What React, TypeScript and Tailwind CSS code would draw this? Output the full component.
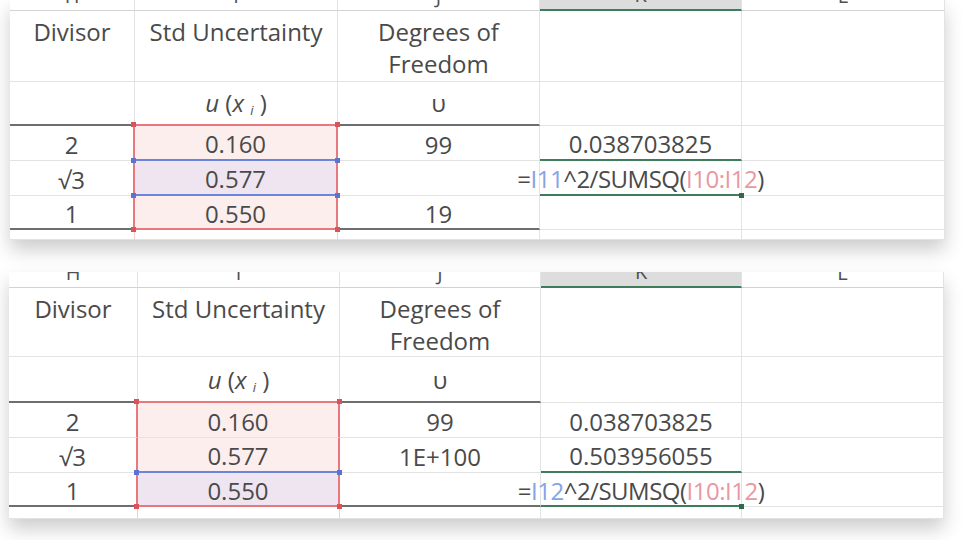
import type { ReactNode } from "react";
import { twMerge } from "tailwind-merge";

// gridline / highlight colours
const RED = "border-r-2 border-r-[#e8787c]";
const THICK = "border-b-2 border-b-[#6e6e6e]";
const BLUE_B = "border-b-2 border-b-[#6d85d8]";
const RED_B = "border-b-2 border-b-[#e8787c]";
const GREEN_B = "border-b-2 border-b-[#3f7c5c]";
const PINK = "bg-[#fdeeee]";
const LAVENDER = "bg-[#eee5f1]";

type CellSpec = { c?: ReactNode; k?: string; h?: ReactNode };

function Cell({ spec, row }: { spec: CellSpec; row: string }) {
  return (
    <div
      className={twMerge(
        "relative flex justify-center border-r border-b border-r-[#e3e3e3] border-b-[#e3e3e3] whitespace-nowrap",
        row,
        spec.k
      )}
    >
      {spec.c}
      {spec.h}
    </div>
  );
}

function Handle({ className }: { className: string }) {
  return <span className={twMerge("absolute z-10 h-[5px] w-[5px]", className)} />;
}

function Formula({ cell }: { cell: string }) {
  return (
    <span className="tracking-[-0.5px]">
      =<span className="text-[#86a3e6]">{cell}</span>^2/SUMSQ(
      <span className="text-[#ea97a3]">I10:I12</span>)
    </span>
  );
}

const Ux = (
  <span>
    <i>u</i> (<i>x</i> <sub className="text-[13px] italic">i</sub> )
  </span>
);

const letters = ["H", "I", "J", "K", "L"];

function headerRow(): CellSpec[] {
  return letters.map((l, i) => ({
    c: <span className="text-[20px] leading-[20px] text-[#505050]">{l}</span>,
    k: i === 3 ? "bg-[#dddddd] " + GREEN_B : "border-b-[#d2d2d2]",
  }));
}

const redTL = <Handle className="-left-[4px] -top-[4px] bg-[#d9535a]" />;
const redTR = <Handle className="-right-[4px] -top-[4px] bg-[#d9535a]" />;
const redBL = <Handle className="-left-[4px] -bottom-[4px] bg-[#d9535a]" />;
const redBR = <Handle className="-right-[4px] -bottom-[4px] bg-[#d9535a]" />;
const blueL = <Handle className="-left-[4px] -bottom-[4px] bg-[#5a74cf]" />;
const blueR = <Handle className="-right-[4px] -bottom-[4px] bg-[#5a74cf]" />;
const fill = <Handle className="-right-[3px] -bottom-[4px] bg-[#2f6b4a]" />;

const topRows: CellSpec[][] = [
  headerRow(),
  [
    { c: "Divisor" },
    { c: "Std Uncertainty" },
    { c: <span className="text-center">Degrees of<br />Freedom</span> },
    {},
    {},
  ],
  [{ k: THICK }, { c: Ux, k: RED_B }, { c: "υ", k: THICK }, {}, {}],
  [
    { c: "2", k: RED },
    { c: "0.160", k: `${RED} ${PINK} ${BLUE_B}`, h: <>{redTL}{redTR}{blueL}{blueR}</> },
    { c: "99" },
    { c: "0.038703825", k: GREEN_B },
    {},
  ],
  [
    { c: "√3", k: RED },
    { c: "0.577", k: `${RED} ${LAVENDER} ${BLUE_B}`, h: <>{blueL}{blueR}</> },
    {},
    { c: <Formula cell="I11" />, k: GREEN_B, h: fill },
    {},
  ],
  [
    { c: "1", k: `${RED} ${THICK}` },
    { c: "0.550", k: `${RED} ${PINK} ${RED_B}`, h: <>{redBL}{redBR}</> },
    { c: "19", k: THICK },
    {},
    {},
  ],
  [
    { k: "border-r-[#f4cccc]" },
    { k: "border-r-[#f4cccc]" },
    {},
    {},
    {},
  ],
];

const bottomRows: CellSpec[][] = [
  headerRow(),
  topRows[1],
  topRows[2],
  [
    { c: "2", k: RED },
    { c: "0.160", k: `${RED} ${PINK}`, h: <>{redTL}{redTR}</> },
    { c: "99" },
    { c: "0.038703825" },
    {},
  ],
  [
    { c: "√3", k: RED },
    { c: "0.577", k: `${RED} ${PINK} ${BLUE_B}`, h: <>{blueL}{blueR}</> },
    { c: "1E+100" },
    { c: "0.503956055", k: GREEN_B },
    {},
  ],
  [
    { c: "1", k: `${RED} ${THICK}` },
    { c: "0.550", k: `${RED} ${LAVENDER} ${RED_B}`, h: <>{redBL}{redBR}</> },
    { k: THICK },
    { c: <Formula cell="I12" />, k: GREEN_B, h: fill },
    {},
  ],
  topRows[6],
];

// per-row alignment: header letters, two-line titles, symbol row, data rows, filler
const rowKinds = [
  "items-end overflow-hidden pb-1",
  "items-start pt-[5px] text-[24px] leading-[32px]",
  "items-end pb-[5px] text-[24px] leading-[32px]",
  "items-center pt-[3px] text-[24px] leading-none",
  "items-center pt-[3px] text-[24px] leading-none",
  "items-center pt-[3px] text-[24px] leading-none",
  "",
];

function Sheet({ rows, grid, className }: { rows: CellSpec[][]; grid: string; className: string }) {
  return (
    <div
      className={twMerge(
        "grid w-[935px] bg-white text-[#4a4a4a] shadow-[0_10px_18px_rgba(0,0,0,0.2)]",
        grid,
        className
      )}
    >
      {rows.map((r, ri) =>
        r.map((spec, ci) => <Cell key={`${ri}-${ci}`} spec={spec} row={rowKinds[ri]} />)
      )}
    </div>
  );
}

export default function App() {
  return (
    <div className="h-[540px] w-[975px] overflow-hidden bg-white font-['Open_Sans',sans-serif]">
      <Sheet
        rows={topRows}
        grid="grid-cols-[125px_203px_202px_202px_203px] grid-rows-[11px_71px_44px_35px_35px_34px_10px]"
        className="ml-[10px]"
      />
      <Sheet
        rows={bottomRows}
        grid="grid-cols-[129px_202px_201px_201px_202px] grid-rows-[16px_69px_46px_35px_35px_34px_12px]"
        className="ml-[9px] mt-[32px]"
      />
    </div>
  );
}
